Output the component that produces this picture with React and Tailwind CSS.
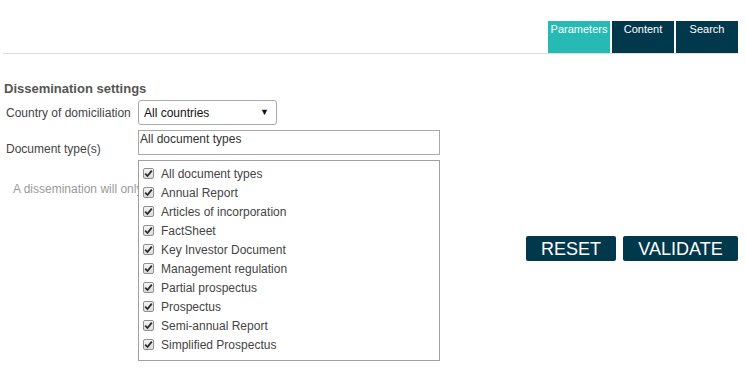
import React from "react";

const docTypes = [
  "All document types",
  "Annual Report",
  "Articles of incorporation",
  "FactSheet",
  "Key Investor Document",
  "Management regulation",
  "Partial prospectus",
  "Prospectus",
  "Semi-annual Report",
  "Simplified Prospectus",
];

function Check() {
  return (
    <span className="w-[11px] h-[11px] border border-[#8f8f8f] rounded-[2px] bg-gradient-to-b from-[#f4f4f4] to-[#dcdcdc] flex items-center justify-center shrink-0">
      <svg width="9" height="9" viewBox="0 0 9 9">
        <path d="M1.2 4.6 L3.5 7 L7.8 1.6" fill="none" stroke="#2b2b2b" strokeWidth="1.8" />
      </svg>
    </span>
  );
}

export default function App() {
  const tabs = [
    { label: "Parameters", active: true },
    { label: "Content" },
    { label: "Search" },
  ];

  return (
    <div className="w-[746px] h-[372px] bg-white overflow-hidden font-['Liberation_Sans',Arial,sans-serif] text-[12px] text-[#444]">
      {/* top tabs */}
      <div className="ml-[3px] w-[735px] pt-[21px] flex justify-end gap-[2px] border-b border-[#dcdcdc]">
        {tabs.map((t) => (
          <div
            key={t.label}
            className={`w-[62px] h-[32px] text-center text-white text-[11px] ${
              t.active ? "bg-[#27bab4]" : "bg-[#02384b]"
            }`}
          >
            {t.label}
          </div>
        ))}
      </div>

      <div className="flex items-start">
        <div className="relative w-[440px]">
          <h2 className="ml-[4px] mt-[27px] text-[13px] font-bold text-[#555] leading-[16px]">
            Dissemination settings
          </h2>

          <div className="flex items-center mt-[3px]">
            <span className="ml-[6px] w-[132px]">Country of domiciliation</span>
            <div className="w-[139px] h-[25px] border border-[#a9a9a9] rounded-[3px] flex items-center justify-between pl-[5px] pr-[7px] text-[#111]">
              <span>All countries</span>
              <span className="text-[9px]">▼</span>
            </div>
          </div>

          <div className="flex mt-[5px]">
            <span className="ml-[6px] w-[132px] mt-[10px]">Document type(s)</span>
            <div className="flex flex-col">
              <div className="w-[302px] h-[25px] border border-[#a9a9a9] px-[1px] leading-[16px] text-[#333]">
                All document types
              </div>
              <div className="relative z-10 bg-white mt-[5px] w-[302px] h-[201px] border border-[#a0a0a0] pt-[3px] pl-[4px]">
                {docTypes.map((d) => (
                  <div key={d} className="flex items-center h-[19px] gap-[7px]">
                    <Check />
                    <span className="text-[#444]">{d}</span>
                  </div>
                ))}
              </div>
            </div>
          </div>

          {/* note partly hidden behind the list */}
          <span className="absolute left-[13px] top-[126px] w-[125px] overflow-hidden text-[#9a9a9a] whitespace-nowrap">
            A dissemination will only be sent
          </span>
        </div>

        <div className="ml-auto mr-[8px] mt-[182px] flex gap-[7px]">
          <button className="w-[90px] h-[25px] bg-[#02384b] rounded-[2px] text-white text-[18px] leading-[24px]">
            RESET
          </button>
          <button className="w-[115px] h-[25px] bg-[#02384b] rounded-[2px] text-white text-[18px] leading-[24px]">
            VALIDATE
          </button>
        </div>
      </div>
    </div>
  );
}
